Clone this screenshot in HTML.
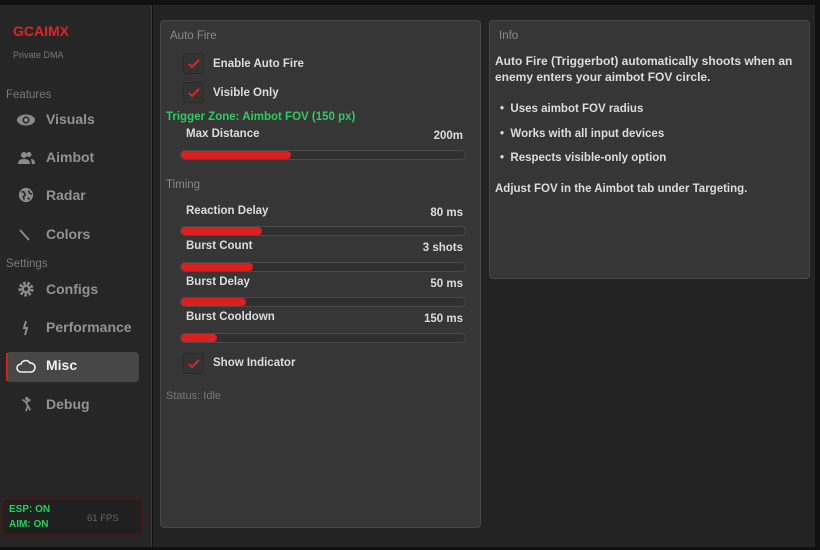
<!DOCTYPE html>
<html><head><meta charset="utf-8"><style>
*{margin:0;padding:0;box-sizing:border-box}
body{width:820px;height:550px;background:#111;font-family:"Liberation Sans",sans-serif;position:relative;overflow:hidden;color:#ddd}
.a{position:absolute;white-space:nowrap}
#side{position:absolute;left:0;top:5px;width:152px;height:542px;background:#262626;border-right:1px solid #3a3a3a}
#main{position:absolute;left:153px;top:5px;width:662px;height:542px;background:#232323}
.panel{position:absolute;background:#363636;border:1px solid #474747;border-radius:4px}
.nav{position:absolute;left:46px;font-size:14px;color:#929292;font-weight:bold}
.ic{position:absolute;left:16px;width:20px;height:16px}
.sec{position:absolute;left:6px;font-size:11.5px;color:#7a7a7a}
.cb{position:absolute;width:21px;height:21px;border:1px solid #2a2a2a;border-radius:3px;background:#333}
.cb svg{position:absolute;left:3px;top:3px}
.lbl{font-size:11.5px;font-weight:bold;color:#dcdcdc}
.track{position:absolute;left:180px;width:286px;height:10px;border:1px solid #4a4a4a;border-radius:5px;background:#303030}
.fill{position:absolute;left:0;top:0;height:8px;border-radius:4px;background:#dc1f1f}
.val{position:absolute;right:357px;font-size:11.5px;font-weight:bold;color:#dcdcdc}
</style></head><body>
<div id="side"></div>
<div id="main"></div>
<div class="a" style="left:13px;top:23px;font-size:14px;font-weight:bold;color:#e02424">GCAIMX</div>
<div class="a" style="left:13px;top:50px;font-size:9px;color:#777">Private DMA</div>
<div class="sec a" style="top:89px">Features</div>
<svg class="ic" style="top:112px" viewBox="0 0 20 16"><ellipse cx="10" cy="8" rx="9" ry="5.5" fill="#8a8a8a"/><circle cx="10" cy="8" r="3.5" fill="#262626"/><circle cx="10" cy="8" r="2" fill="#8a8a8a"/></svg>
<div class="nav a" style="top:111px">Visuals</div>
<svg class="ic" style="top:150px" viewBox="0 0 20 16"><circle cx="8" cy="5" r="3" fill="#8a8a8a"/><circle cx="13" cy="4.5" r="2.5" fill="#8a8a8a"/><path d="M2 14c0-4 3-5 6-5s6 1 6 5z M15 9c2 0 4 1 4 5h-3z" fill="#8a8a8a"/></svg>
<div class="nav a" style="top:149px">Aimbot</div>
<svg class="ic" style="top:187px" viewBox="0 0 20 18"><circle cx="10" cy="9" r="8" fill="#8a8a8a"/><path d="M5 5l3 1 1 3-2 2 1 3M13 4l1 3 3 1M12 12l2 2" stroke="#262626" stroke-width="1.8" fill="none"/></svg>
<div class="nav a" style="top:187px">Radar</div>
<svg class="ic" style="top:227px" viewBox="0 0 20 16"><path d="M4 3l9 10" stroke="#8a8a8a" stroke-width="2"/></svg>
<div class="nav a" style="top:226px">Colors</div>
<div class="sec a" style="top:258px">Settings</div>
<svg class="ic" style="top:281px" viewBox="0 0 20 18"><circle cx="10" cy="9" r="6" fill="none" stroke="#8a8a8a" stroke-width="5" stroke-dasharray="2.6 1.6"/><circle cx="10" cy="9" r="5" fill="#8a8a8a"/><circle cx="10" cy="9" r="2.2" fill="#262626"/></svg>
<div class="nav a" style="top:281px">Configs</div>
<svg class="ic" style="top:320px" viewBox="0 0 20 16"><path d="M10 1l-2 7h3l-2 7" stroke="#8a8a8a" stroke-width="2" fill="none"/></svg>
<div class="nav a" style="top:319px">Performance</div>
<div class="a" style="left:6px;top:352px;width:133px;height:30px;background:#474747;border-radius:4px"></div>
<div class="a" style="left:6px;top:353px;width:2px;height:28px;background:#d42020"></div>
<svg class="ic" style="top:359px" viewBox="0 0 20 16"><path d="M5 13a4 4 0 0 1 0-8 5 5 0 0 1 9-1 4 4 0 0 1 1 9z" fill="none" stroke="#eee" stroke-width="1.6"/></svg>
<div class="nav a" style="top:357px;color:#f2f2f2">Misc</div>
<svg class="ic" style="top:396px" viewBox="0 0 20 18"><circle cx="11" cy="3" r="2" fill="#8a8a8a"/><path d="M6 4l4 3 2 4-2 6M12 11l3 5M10 7l5-3" stroke="#8a8a8a" stroke-width="2" fill="none"/></svg>
<div class="nav a" style="top:396px">Debug</div>
<div class="a" style="left:2px;top:498px;width:141px;height:37px;border:1px solid #4a1a1a;border-radius:5px;background:#202020"></div>
<div class="a" style="left:9px;top:504px;font-size:10px;font-weight:bold;color:#1fd35a">ESP: ON</div>
<div class="a" style="left:9px;top:519px;font-size:10px;font-weight:bold;color:#1fd35a">AIM: ON</div>
<div class="a" style="left:87px;top:513px;font-size:9.5px;color:#666">61 FPS</div>

<div class="panel" style="left:160px;top:20px;width:321px;height:508px"></div>
<div class="panel" style="left:489px;top:20px;width:321px;height:259px"></div>

<div class="a" style="left:170px;top:30px;font-size:11.5px;color:#8a8a8a">Auto Fire</div>
<div class="cb" style="left:183px;top:53px"><svg width="14" height="14" viewBox="0 0 14 14"><path d="M2 7l3 3 7-7" stroke="#e02424" stroke-width="2" fill="none"/></svg></div>
<div class="a lbl" style="left:213px;top:58px">Enable Auto Fire</div>
<div class="cb" style="left:183px;top:82px"><svg width="14" height="14" viewBox="0 0 14 14"><path d="M2 7l3 3 7-7" stroke="#e02424" stroke-width="2" fill="none"/></svg></div>
<div class="a lbl" style="left:213px;top:87px">Visible Only</div>
<div class="a" style="left:166px;top:111px;font-size:11.5px;font-weight:bold;color:#2ecc5e">Trigger Zone: Aimbot FOV (150 px)</div>
<div class="a lbl" style="left:186px;top:128px">Max Distance</div><div class="val" style="top:130px">200m</div>
<div class="track" style="top:150px"><div class="fill" style="width:110px"></div></div>
<div class="a" style="left:166px;top:179px;font-size:11.5px;color:#8a8a8a">Timing</div>
<div class="a lbl" style="left:186px;top:205px">Reaction Delay</div><div class="val" style="top:207px">80 ms</div>
<div class="track" style="top:226px"><div class="fill" style="width:81px"></div></div>
<div class="a lbl" style="left:186px;top:240px">Burst Count</div><div class="val" style="top:242px">3 shots</div>
<div class="track" style="top:262px"><div class="fill" style="width:72px"></div></div>
<div class="a lbl" style="left:186px;top:276px">Burst Delay</div><div class="val" style="top:278px">50 ms</div>
<div class="track" style="top:297px"><div class="fill" style="width:65px"></div></div>
<div class="a lbl" style="left:186px;top:311px">Burst Cooldown</div><div class="val" style="top:313px">150 ms</div>
<div class="track" style="top:333px"><div class="fill" style="width:36px"></div></div>
<div class="cb" style="left:183px;top:353px"><svg width="14" height="14" viewBox="0 0 14 14"><path d="M2 7l3 3 7-7" stroke="#e02424" stroke-width="2" fill="none"/></svg></div>
<div class="a lbl" style="left:213px;top:357px">Show Indicator</div>
<div class="a" style="left:166px;top:390px;font-size:11px;color:#777">Status: Idle</div>

<div class="a" style="left:499px;top:30px;font-size:11.5px;color:#8a8a8a">Info</div>
<div class="a" style="left:495px;top:53px;font-size:12px;font-weight:bold;color:#dcdcdc;line-height:16px">Auto Fire (Triggerbot) automatically shoots when an<br>enemy enters your aimbot FOV circle.</div>
<div class="a" style="left:500px;top:97px;font-size:11.5px;font-weight:bold;color:#dcdcdc;line-height:24.5px">•&nbsp; Uses aimbot FOV radius<br>•&nbsp; Works with all input devices<br>•&nbsp; Respects visible-only option</div>
<div class="a" style="left:495px;top:183px;font-size:11.5px;font-weight:bold;color:#dcdcdc">Adjust FOV in the Aimbot tab under Targeting.</div>
</body></html>
